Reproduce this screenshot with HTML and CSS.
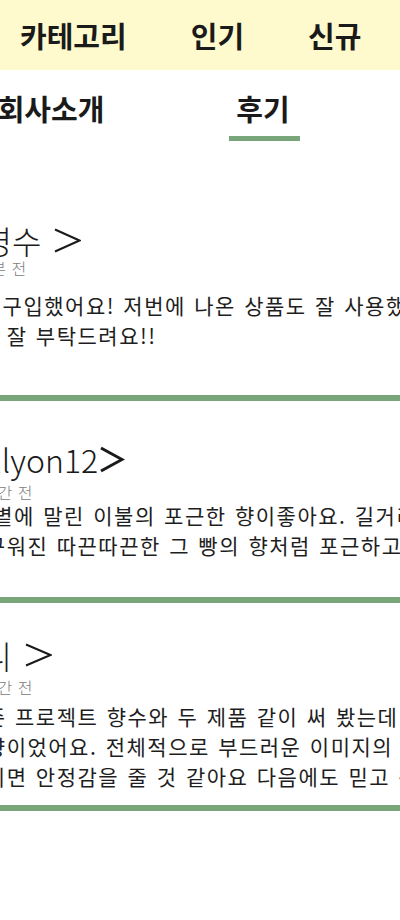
FILE: index.html
```html
<!DOCTYPE html>
<html lang="ko">
<head>
<meta charset="utf-8">
<title>후기</title>
<link rel="stylesheet" href="styles.css">
</head>
<body>
<header class="topbar">
  <nav class="topnav">
    <a class="topnav__item">카테고리</a>
    <a class="topnav__item">인기</a>
    <a class="topnav__item">신규</a>
  </nav>
</header>

<nav class="tabs">
  <a class="tab">회사소개</a>
  <a class="tab tab--active">후기<span class="tab__bar"></span></a>
</nav>

<main class="reviews">
  <article class="review review--1">
    <div class="review__head">
      <span class="avatar"></span>
      <div class="review__meta">
        <div class="review__name">김영수<svg class="chev" width="27" height="25" viewBox="0 0 27 25"><polyline points="1,1.5 25.5,12.5 1,23.5" fill="none" stroke="#1a1a1a" stroke-width="2"/></svg></div>
        <div class="review__time">약 30분 전</div>
      </div>
    </div>
    <p class="review__text">한 번 더 구입했어요! 저번에 나온 상품도 잘 사용했어서 이번에도 믿고 샀어요.<br>앞으로도 잘 부탁드려요!!</p>
  </article>
  <div class="divider"></div>

  <article class="review review--2">
    <div class="review__head">
      <span class="avatar"></span>
      <div class="review__meta">
        <div class="review__name review__name--tight">Hallyon12<svg class="chev" width="26" height="27" viewBox="0 0 26 27"><polyline points="2,2 23,13.5 2,25" fill="none" stroke="#1a1a1a" stroke-width="3"/></svg></div>
        <div class="review__time">약 1시간 전</div>
      </div>
    </div>
    <p class="review__text">우와, 햇볕에 말린 이불의 포근한 향이좋아요. 길거리를 걷다 맡게 되는<br>오븐에 구워진 따끈따끈한 그 빵의 향처럼 포근하고 따뜻해요.</p>
  </article>
  <div class="divider"></div>

  <article class="review review--3">
    <div class="review__head">
      <span class="avatar"></span>
      <div class="review__meta">
        <div class="review__name">써니<svg class="chev" width="27" height="24" viewBox="0 0 27 24"><polyline points="1,1.5 25.5,12 1,22.5" fill="none" stroke="#1a1a1a" stroke-width="2"/></svg></div>
        <div class="review__time">약 2시간 전</div>
      </div>
    </div>
    <p class="review__text">지난 시즌 프로젝트 향수와 두 제품 같이 써 봤는데 잘 어울려요.<br>은은한 향이었어요. 전체적으로 부드러운 이미지의 향이라<br>같이 뿌리면 안정감을 줄 것 같아요 다음에도 믿고 구매할게요.</p>
  </article>
  <div class="divider"></div>
</main>
</body>
</html>
```

FILE: styles.css
```css
html, body {
  margin: 0;
  padding: 0;
  overflow-x: hidden;
  background: #ffffff;
}

body {
  font-family: "Noto Sans CJK KR", "Noto Sans", sans-serif;
  color: #1a1a1a;
  width: 400px;
}

a {
  color: inherit;
  text-decoration: none;
}

.topbar {
  background: #fffacd;
  height: 70px;
  display: flex;
  align-items: center;
}

.topnav {
  display: flex;
  gap: 64px;
  padding-left: 20px;
  font-size: 29px;
  font-weight: 700;
  line-height: 36px;
  white-space: nowrap;
}

.tabs {
  display: flex;
  margin-left: -55px;
  width: 700px;
}

.tab {
  width: 212px;
  display: flex;
  flex-direction: column;
  align-items: center;
  padding-top: 20px;
  font-size: 29px;
  font-weight: 700;
  line-height: 36px;
  white-space: nowrap;
}

.tab__bar {
  display: block;
  width: 71px;
  height: 5px;
  margin-top: 10px;
  margin-left: 2px;
  background: #78a57a;
}

.reviews {
  margin-left: -85px;
  width: 800px;
}

.review__head {
  display: flex;
  align-items: flex-start;
  gap: 10px;
}

.avatar {
  flex: none;
  width: 28px;
  height: 28px;
  margin-top: 6px;
  border-radius: 50%;
  background: #e6e6e6;
}

.review__meta {
  display: flex;
  flex-direction: column;
}

.review__name {
  display: flex;
  align-items: center;
  gap: 13px;
  font-size: 32px;
  font-weight: 300;
  line-height: 40px;
  white-space: nowrap;
}

.review__name--tight {
  gap: 1px;
}

.chev {
  display: block;
  flex: none;
}

.review__time {
  font-size: 16px;
  font-weight: 300;
  letter-spacing: 0.5px;
  line-height: 16px;
  color: #808080;
  white-space: nowrap;
}

.review__text {
  margin: 0;
  font-size: 21px;
  letter-spacing: 1.5px;
  word-spacing: 1px;
  line-height: 30px;
  min-height: 90px;
  white-space: nowrap;
  color: #1e1e1e;
}

.divider {
  height: 6px;
  background: #78a57a;
  width: 800px;
}

.review--1 { padding-top: 79px; padding-bottom: 15px; }
.review--1 .review__time { margin-top: 0; }
.review--1 .review__text { margin-top: 14px; }

.review--2 { padding-top: 38px; padding-bottom: 7px; }
.review--2 .review__time { margin-top: 5px; }
.review--2 .review__text { margin-top: 0; }

.review--3 { padding-top: 32px; padding-bottom: 14px; }
.review--3 .review__time { margin-top: 4px; }
.review--3 .review__text { margin-top: 6px; }
```
